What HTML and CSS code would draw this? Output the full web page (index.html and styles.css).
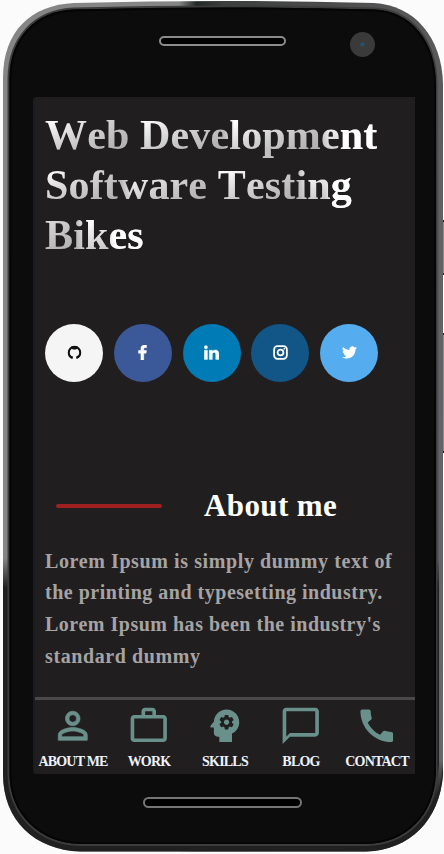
FILE: index.html
```html
<!DOCTYPE html>
<html lang="en">
<head>
<meta charset="utf-8">
<title>Portfolio</title>
<link rel="stylesheet" href="styles.css">
</head>
<body>
<div class="phone">
  <svg class="frame" viewBox="0 0 444 854" aria-hidden="true">
    <defs>
      <linearGradient id="rim" x1="0" y1="0" x2="1" y2="0">
        <stop offset="0" stop-color="#858585"/><stop offset=".4" stop-color="#858585"/><stop offset=".44" stop-color="#222825"/><stop offset=".5" stop-color="#3c3e3d"/><stop offset="1" stop-color="#5b595c"/>
      </linearGradient>
      <linearGradient id="shade" x1="0" y1="0" x2="0" y2="1">
        <stop offset=".655" stop-color="#202020" stop-opacity="0"/><stop offset=".69" stop-color="#202020"/>
      </linearGradient>
      <linearGradient id="right" x1="0" y1="0" x2="0" y2="1">
        <stop offset=".05" stop-color="#606063" stop-opacity="0"/><stop offset=".15" stop-color="#606063"/><stop offset=".9" stop-color="#69666b"/><stop offset=".97" stop-color="#222" stop-opacity="0"/>
      </linearGradient>
    </defs>
    <path d="M442 220h2v54h-2zM442 333h2v120h-2z" fill="#8d8d8d"/>
    <path d="M442 220h2v2h-2zM442 273h2v2h-2zM442 333h2v2h-2zM442 451h2v2h-2z" fill="#222"/>
    <path d="M3 78C3 31 31 5 74 3Q222-1 374 3C414 5 442 37 443 84V774C440 820 410 850 366 851.500H80C35 850 3 821 3 774Z" fill="url(#rim)"/>
    <path d="M3 78C3 31 31 5 74 3Q222-1 374 3C414 5 442 37 443 84V774C440 820 410 850 366 851.500H80C35 850 3 821 3 774Z" fill="url(#shade)"/>
    <path d="M438 70Q441 80 441 100V765Q438 812 398 837" fill="none" stroke="url(#right)" stroke-width="4"/>
    <path d="M8.500 78C9 38 34 10 74 8.500Q222 4.500 374 8.500C410 10 436 38 436.500 84V774C435 815 408 844 366 845H80C39 844 9 815 8.500 774Z" fill="#0c0c0c" stroke="#3c3c3c" stroke-width="2"/>
    <path d="M10.500 78C11 39 35 12 74 10.500Q222 6.500 374 10.500C409 12 434.500 40 435 84V774C433 814 407 842 366 843H80C40 842 11 814 10.500 774Z" fill="#0c0c0c" stroke="#050505" stroke-width="2"/>
  </svg>
  <header class="bezel bezel-top"><span class="speaker"></span><span class="camera"></span></header>
  <main class="screen">
    <section class="content">
      <h1 class="title"><span class="line line-a">Web Development</span><span class="line line-b">Software Testing</span><span class="line line-c">Bikes</span></h1>
      <div class="social">
        <a class="github"><svg viewBox="0 0 16 16"><path d="M5.900 13.700C3 12.900 1.900 10.600 1.900 8a6.100 6.100 0 0 1 12.200 0c0 2.600-1.200 4.900-4 5.700" fill="none" stroke="#111" stroke-width="2.200"/><path d="M4.300 3.500l2.200 1.200h3l2.200-1.200V1.500H4.300zM2.600 10.600c1.500 0 1.600 1.700 3.400 1.400v2.600l-2-.6zM13 10.500l-2.900 1.700v2.500l2.400-1.200z"/></svg></a>
        <a class="facebook"><svg viewBox="0 0 16 16"><path d="M12.300.2v2.600h-1.500c-1.200 0-1.500.6-1.500 1.400v1.700h2.900l-.4 2.900H9.300V16h-3V8.800H3.700V5.900h2.600V3.800C6.300 1.300 7.800 0 10.100 0c1.100 0 2 .1 2.200.2z" stroke="#fff" stroke-width=".5"/></svg></a>
        <a class="linkedin"><svg viewBox="0 0 16 16"><path d="M.3 5.500h3.400v9.900H.3zM2 .6a1.800 1.800 0 1 1 0 3.600A1.800 1.800 0 0 1 2 .6zM5.600 5.500h3.300v1.400c.5-.8 1.400-1.700 3.200-1.700 2.200 0 3.800 1.400 3.800 4.500v5.700h-3.400v-5.300c0-1.300-.5-2.200-1.700-2.200-1.300 0-1.900.9-1.900 2.200v5.300H5.600z" stroke="#fff" stroke-width=".4"/></svg></a>
        <a class="instagram"><svg viewBox="0 0 16 16"><rect x="1.200" y="1.200" width="13.600" height="13.600" rx="3.500" fill="none" stroke="#fff" stroke-width="1.900"/><circle cx="8" cy="8" r="3.100" fill="none" stroke="#fff" stroke-width="1.900"/><circle cx="12.100" cy="3.900" r="1"/></svg></a>
        <a class="twitter"><svg viewBox="0 0 16 16"><path d="M16 3.040a6.600 6.600 0 0 1-1.890.52 3.300 3.300 0 0 0 1.450-1.820 6.600 6.600 0 0 1-2.090.8 3.280 3.280 0 0 0-5.590 3A9.300 9.300 0 0 1 1.110 2.100a3.280 3.280 0 0 0 1.020 4.380 3.300 3.300 0 0 1-1.490-.41v.04a3.280 3.280 0 0 0 2.630 3.220 3.300 3.300 0 0 1-1.480.06 3.280 3.280 0 0 0 3.070 2.280A6.580 6.580 0 0 1 0 13.030 9.300 9.300 0 0 0 5.030 14.500c6.040 0 9.340-5 9.340-9.340v-.42A6.700 6.700 0 0 0 16 3.040z"/></svg></a>
      </div>
      <div class="about-head"><span class="rule"></span><h2>About me</h2></div>
      <p class="about">Lorem Ipsum is simply dummy text of<br><span class="snug">the printing and typesetting industry.<br>Lorem Ipsum has been the industry's</span><br>standard dummy</p>
    </section>
    <nav class="tabs">
      <a><svg viewBox="0 0 24 24"><path d="M12 5.900a2.100 2.100 0 1 1 0 4.200 2.100 2.100 0 0 1 0-4.200m0 9c2.970 0 6.100 1.460 6.100 2.100v1.100H5.900V17c0-.64 3.130-2.100 6.100-2.100M12 4C9.790 4 8 5.790 8 8s1.790 4 4 4 4-1.790 4-4-1.790-4-4-4zm0 9c-2.670 0-8 1.340-8 4v3h16v-3c0-2.660-5.330-4-8-4z" stroke="#6a908c" stroke-width=".4"/></svg><span>ABOUT ME</span></a>
      <a><svg viewBox="0 0 24 24"><path fill-rule="evenodd" d="M14 6V4h-4v2h4zM4 8v11h16V8H4zm16-2c1.110 0 2 .89 2 2v11c0 1.110-.89 2-2 2H4c-1.110 0-2-.89-2-2V8c0-1.110.89-2 2-2h4V4c0-1.110.89-2 2-2h4c1.110 0 2 .89 2 2v2h4z"/></svg><span>WORK</span></a>
      <a><svg viewBox="0 0 24 24"><path d="M13 8.570c-.79 0-1.430.64-1.430 1.430s.64 1.430 1.430 1.430 1.430-.64 1.430-1.430-.64-1.430-1.430-1.430z"/><path d="M13 3C9.250 3 6.200 5.940 6.020 9.640L4.100 12.200c-.25.33-.01.8.4.8H6v3c0 1.100.9 2 2 2h1v3h7v-4.680c2.360-1.120 4-3.530 4-6.320 0-3.870-3.130-7-7-7zm3 7c0 .13-.01.26-.02.39l.83.66c.08.06.1.16.05.25l-.8 1.390c-.05.09-.16.12-.24.09l-.99-.4c-.21.16-.43.29-.67.39L14 13.830c-.01.1-.1.17-.2.17h-1.600c-.1 0-.18-.07-.2-.17l-.15-1.060c-.25-.1-.47-.23-.68-.39l-.99.4c-.09.03-.2 0-.25-.09l-.8-1.390c-.05-.08-.03-.19.05-.25l.84-.66c-.01-.13-.02-.26-.02-.39s.02-.27.04-.39l-.85-.66c-.08-.06-.1-.16-.05-.26l.8-1.380c.05-.09.15-.12.24-.09l1 .4c.2-.15.43-.29.67-.39L12 6.170c.02-.1.1-.17.2-.17h1.600c.1 0 .18.07.2.17l.15 1.060c.24.1.46.23.67.39l1-.4c.09-.03.2 0 .24.09l.8 1.380c.05.09.03.2-.05.26l-.85.66c.03.12.04.25.04.39z"/></svg><span>SKILLS</span></a>
      <a><svg viewBox="0 0 24 24"><path d="M20 2H4c-1.100 0-2 .9-2 2v18l4-4h14c1.100 0 2-.9 2-2V4c0-1.100-.9-2-2-2zm0 14H6l-2 2V4h16v12z"/></svg><span>BLOG</span></a>
      <a><svg viewBox="0 0 24 24"><path d="M20.010 15.380c-1.230 0-2.420-.2-3.530-.56-.35-.12-.74-.03-1.010.24l-1.570 1.970c-2.830-1.350-5.480-3.900-6.890-6.830l1.950-1.660c.27-.28.35-.67.24-1.020-.37-1.110-.56-2.300-.56-3.530 0-.54-.45-.99-.99-.99H4.190C3.650 3 3 3.240 3 3.990 3 13.280 10.730 21 20.010 21c.71 0 .99-.63.99-1.180v-3.450c0-.54-.45-.99-.99-.99z"/></svg><span>CONTACT</span></a>
    </nav>
  </main>
  <footer class="bezel bezel-bottom"><span class="speaker"></span></footer>
</div>
</body>
</html>
```
FILE: styles.css
```css
* { box-sizing: border-box; }
body { margin: 0; background: #fbfbfb; font-family: "Liberation Serif", serif; overflow: hidden; }
.phone { position: relative; width: 444px; height: 854px; display: grid; grid-template-rows: 97px 677px 80px; }
.frame { position: absolute; top: 0; left: 0; width: 444px; height: 854px; }
.bezel { position: relative; display: flex; align-items: flex-start; }
.bezel-top { padding: 36px 0 0 159px; gap: 64px; }
.speaker { height: 10px; width: 127px; border: 2px solid #8b8b8b; border-radius: 5px; background: #000; }
.bezel-bottom { padding: 23px 0 0 142.5px; }
.bezel-bottom .speaker { width: 159.5px; height: 11px; border-color: #757575; border-radius: 6px; }
.camera { width: 25px; height: 25px; margin-top: -4px; border-radius: 50%; background: radial-gradient(circle, #17639a 0, #2a4b5c 1.5px, #3a3a3a 3px); }
.screen { position: relative; width: 382px; margin-left: 33px; border-left: 2px solid #191d22; background: #211e1f; display: flex; flex-direction: column; border-radius: 3px 0 0 3px; }
.content { flex: 1; padding: 13px 10px 0; }
.title { margin: 0; font-size: 42px; line-height: 50px; letter-spacing: .15px; font-kerning: none; display: flex; flex-direction: column; align-items: flex-start; }
.line {
  --end: 300px; --shift: 0px; --period: 95px;
  white-space: nowrap; color: transparent; -webkit-background-clip: text; background-clip: text;
  background-image: linear-gradient(90deg, transparent var(--end), #fff calc(var(--end) + 8px)),
    linear-gradient(180deg, transparent 12px, rgba(150, 150, 150, .45) 40px),
    repeating-linear-gradient(95deg, #fff var(--shift), #c2c2c2 calc(var(--shift) + var(--period) - 10px), #fff calc(var(--shift) + var(--period)));
}
.line-a { --end: 291px; }
.line-b { --end: 280px; --period: 88px; }
.line-c { --end: 61px; --shift: -45px; --period: 88px; }
.social { display: flex; gap: 10.75px; margin-top: 63.5px; }
.social a { width: 58px; height: 58px; border-radius: 50%; display: grid; place-items: center; fill: #fff; }
.social svg { width: 15px; height: 15px; }
.social .github { background: #f5f5f5; fill: #111; }
.facebook { background: #3b5998; }
.linkedin { background: #007bb6; }
.instagram { background: #125688; }
.twitter { background: #55acee; }
.about-head { display: flex; align-items: center; margin-top: 106px; height: 36px; padding-left: 11px; }
.rule { width: 106px; height: 4px; border-radius: 2px; background: #9f2020; }
h2 { margin: 0 0 0 42px; color: #fff; font-size: 31px; letter-spacing: .4px; line-height: 36px; }
.about { margin: 22px 0 0; color: #a5a3a3; font-weight: bold; font-size: 20px; line-height: 31.8px; letter-spacing: .6px; white-space: nowrap; }
.snug { letter-spacing: .51px; }
.tabs { display: grid; grid-template-columns: repeat(5, 76px); height: 77px; border-top: 3px solid #4b4949; }
.tabs a { display: flex; flex-direction: column; align-items: center; padding-top: 4px; fill: #6a908c; color: #edf2fa; font-weight: bold; font-size: 14px; line-height: 16px; letter-spacing: -.8px; white-space: nowrap; }
.tabs svg { width: 43.5px; height: 43.5px; margin-bottom: 6px; flex: none; }
```
